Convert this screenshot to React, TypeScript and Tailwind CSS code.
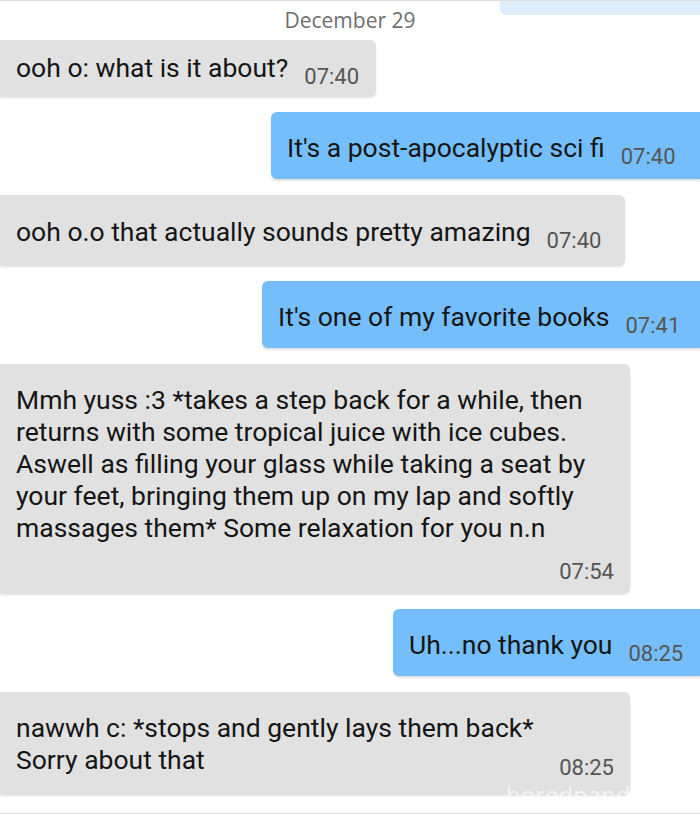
import React from "react"

const FONT = "font-['Roboto','Liberation_Sans',sans-serif]"

function Time({ t }: { t: string }) {
  return <span className="ml-[16px] text-[22px] text-[#555] align-[-7px]">{t}</span>
}

function Left({
  lines,
  time,
  width,
  height,
  block,
  timeMt = 0,
  pt = 10,
}: {
  lines: string[]
  time: string
  width: number
  height: number
  block?: boolean
  timeMt?: number
  pt?: number
}) {
  if (!block) {
    return (
      <div
        className="flex items-center rounded-r-md bg-[#e1e1e1] pl-4 shadow-[0_2px_2px_rgba(0,0,0,0.12)]"
        style={{ width, height, paddingTop: pt }}
      >
        <span className="whitespace-nowrap text-[26.5px] text-[#151515]">
          {lines[0]}
          <Time t={time} />
        </span>
      </div>
    )
  }
  return (
    <div
      className="flex flex-col rounded-r-md bg-[#e1e1e1] pt-[20px] pl-4 pr-4 shadow-[0_2px_2px_rgba(0,0,0,0.12)]"
      style={{ width, height }}
    >
      <div className="text-[26.5px] leading-[32px] text-[#151515]">
        {lines.map((l, i) => (
          <div key={i} className="whitespace-nowrap">
            {l}
          </div>
        ))}
      </div>
      <div
        className="text-right text-[22px] leading-[28px] text-[#555]"
        style={{ marginTop: timeMt }}
      >
        {time}
      </div>
    </div>
  )
}

function Right({ text, time, width }: { text: string; time: string; width: number }) {
  return (
    <div className="flex justify-end">
      <div
        className="flex h-[67px] items-center rounded-l-md bg-[#74bffb] pt-[10px] pl-4 shadow-[0_2px_2px_rgba(0,0,0,0.12)]"
        style={{ width }}
      >
        <span className="whitespace-nowrap text-[26.5px] text-[#151515]">
          {text}
          <Time t={time} />
        </span>
      </div>
    </div>
  )
}

export default function App() {
  return (
    <div className={`relative h-[814px] w-[700px] overflow-hidden border-y border-[#dcdcdc] bg-white ${FONT}`}>
      <div className="flex justify-end">
        <div className="h-[14px] w-[200px] rounded-bl-md bg-[#ddeefa]" />
      </div>
      <div className="mt-[-9px] text-center font-['Open_Sans',sans-serif] text-[21px] leading-[28px] text-[#6f6f6f]">
        December 29
      </div>
      <div className="mt-[6px] flex flex-col gap-[16px]">
        <Left lines={["ooh o: what is it about?"]} time="07:40" width={376} height={56} pt={4} />
        <Right text="It's a post-apocalyptic sci fi" time="07:40" width={429} />
        <Left lines={["ooh o.o that actually sounds pretty amazing"]} time="07:40" width={625} height={70} pt={8} />
        <Right text="It's one of my favorite books" time="07:41" width={438} />
        <Left
          block
          width={630}
          height={229}
          time="07:54"
          timeMt={14}
          lines={[
            "Mmh yuss :3 *takes a step back for a while, then",
            "returns with some tropical juice with ice cubes.",
            "Aswell as filling your glass while taking a seat by",
            "your feet, bringing them up on my lap and softly",
            "massages them* Some relaxation for you n.n",
          ]}
        />
        <Right text="Uh...no thank you" time="08:25" width={307} />
        <Left
          block
          width={630}
          height={102}
          time="08:25"
          timeMt={-22}
          lines={["nawwh c: *stops and gently lays them back*", "Sorry about that"]}
        />
      </div>
      <div className="absolute left-[506px] top-[776px] font-['Open_Sans',sans-serif] text-[24px] text-white/70">
        boredpanda
      </div>
    </div>
  )
}
